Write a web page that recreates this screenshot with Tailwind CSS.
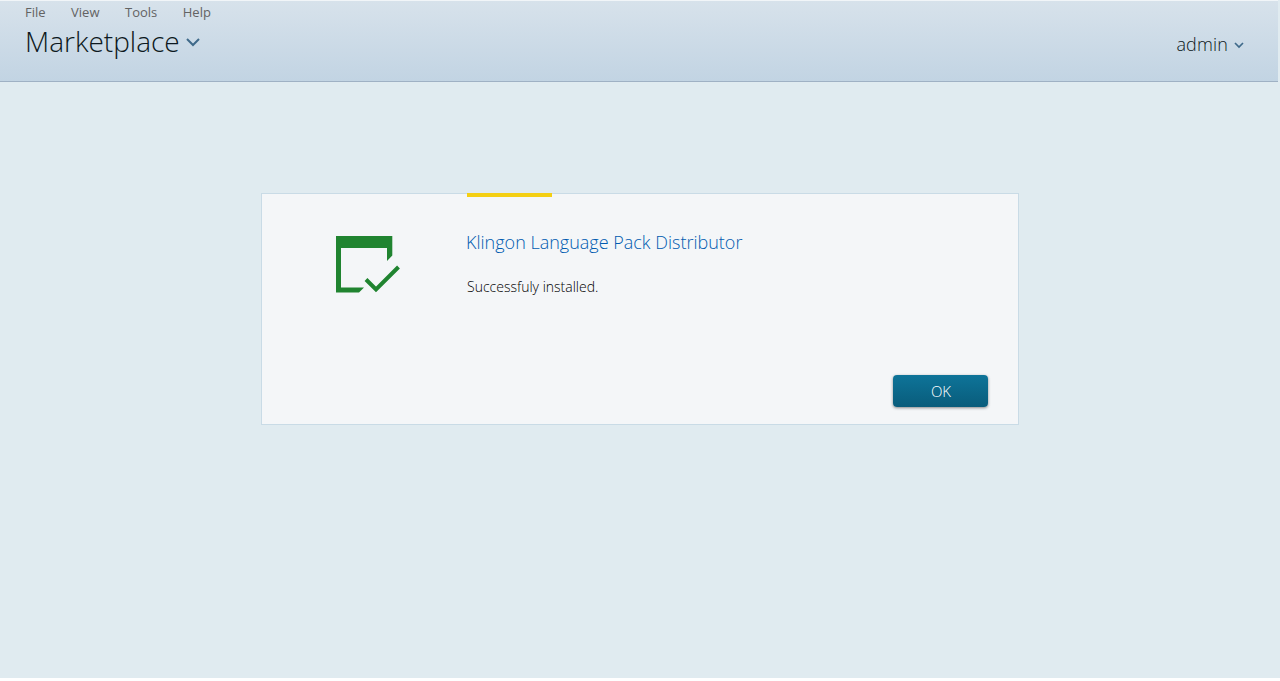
<!DOCTYPE html>
<html lang="en">
<head>
<meta charset="utf-8">
<title>Marketplace</title>
<script src="https://cdn.jsdelivr.net/npm/@tailwindcss/browser@4"></script>
</head>
<body class="bg-white font-['Open_Sans',sans-serif]">
<div class="flex h-[678px] flex-col bg-[#e0ebf0]">
  <header class="flex h-[82px] w-[1278px] justify-between border-t border-b border-t-[#f1f5f8] border-b-[#9fb1c4] bg-linear-to-b from-[#d7e2eb] to-[#c2d4e3]">
    <div class="pl-[25px]">
      <nav class="flex h-[23px] gap-[25.5px] text-[13px] leading-[23px] text-[#636363]">
        <span>File</span><span>View</span><span>Tools</span><span>Help</span>
      </nav>
      <h1 class="flex items-center text-[28px] leading-[35px] font-light text-[#0c1820]">
        <span>Marketplace</span>
        <svg class="ml-[6px] mt-px h-[10px] w-[14px]" viewBox="0 0 14 10" fill="none" stroke="#3f6a8a" stroke-width="2"><path d="M1 2l6 6 6-6"/></svg>
      </h1>
    </div>
    <div class="flex h-[86px] items-center pr-[34px] text-[18px] font-light text-[#0c1820]">
      <span class="tracking-[0.15px]">admin</span>
      <svg class="ml-[6px] mt-px h-[8px] w-[10px]" viewBox="0 0 10 8" fill="none" stroke="#3f6a8a" stroke-width="1.7"><path d="M1 2l4 4 4-4"/></svg>
    </div>
  </header>
  <main class="mt-[111px] ml-[261px] flex h-[232px] w-[758px] border border-[#c9dbe6] bg-[#f4f6f8]">
    <div class="w-[205px] pt-[42px] pl-[74px]">
      <svg class="h-[57px] w-[64px]" viewBox="0 0 64 57" fill="#208430"><path d="M0 0H56.300V19.500L51 25V12H5V51.500H28L23 56.500H0Z"/><path d="M30 43.500l10 10L62.500 31" fill="none" stroke="#208430" stroke-width="4"/></svg>
    </div>
    <div class="flex flex-1 flex-col pr-[30px]">
      <div class="-mt-px h-1 w-[85px] bg-[#f4cf13]"></div>
      <h2 class="mt-[32px] -ml-px text-[18px] leading-[26px] font-light text-[#005bb0]">Klingon Language Pack Distributor</h2>
      <p class="mt-[22px] text-[14px] leading-5 font-light text-black">Successfuly installed.</p>
      <button class="mt-auto mb-[17px] h-8 w-[95px] self-end rounded-[4px] bg-linear-to-b from-[#0e7499] to-[#095c7b] pl-px text-[15px] font-light text-white shadow-[0_1px_3px_rgba(0,0,0,0.45)]">OK</button>
    </div>
  </main>
</div>
</body>
</html>
